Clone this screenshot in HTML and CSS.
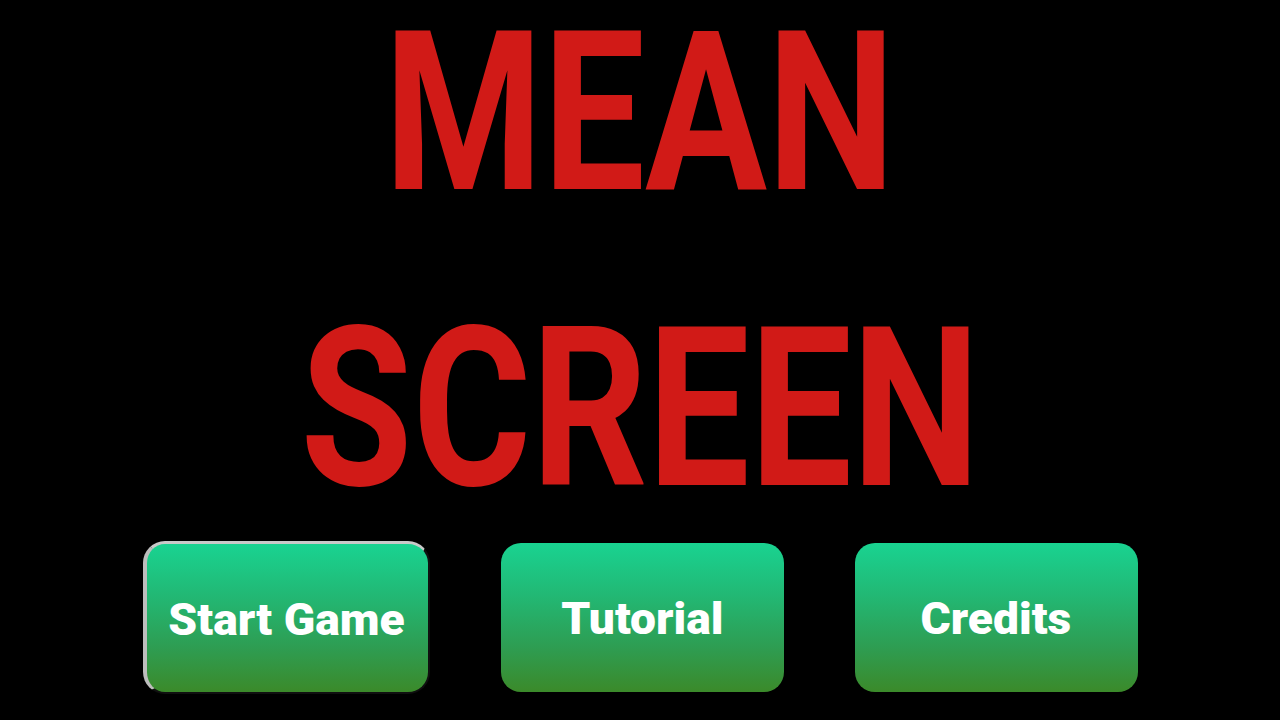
FILE: index.html
```html
<!DOCTYPE html>
<html>
<head>
<meta charset="utf-8">
<link rel="stylesheet" href="styles.css">
</head>
<body>
<main class="screen">
  <h1 class="title">
    <span class="word">MEAN</span>
    <span class="word">SCREEN</span>
  </h1>
  <nav class="menu">
    <button class="btn btn-focus"><span class="label">Start Game</span></button>
    <button class="btn"><span class="label">Tutorial</span></button>
    <button class="btn"><span class="label">Credits</span></button>
  </nav>
</main>
</body>
</html>
```
FILE: styles.css
```css
html, body {
  margin: 0;
  padding: 0;
  background: #000;
  width: 1280px;
  height: 720px;
  overflow: hidden;
}
.screen {
  display: flex;
  flex-direction: column;
  align-items: center;
  width: 1280px;
  height: 720px;
}
.title {
  margin: 0;
  padding-top: 2px;
  display: flex;
  flex-direction: column;
  align-items: center;
  gap: 74px;
  font-family: Roboto, "Liberation Sans", sans-serif;
  font-weight: 700;
  font-size: 222px;
  line-height: 222px;
  color: #d11a17;
}
.word {
  display: block;
  transform: scaleX(0.818);
  white-space: nowrap;
}
.menu {
  margin-top: 21px;
  display: flex;
  align-items: center;
  justify-content: center;
  gap: 71px;
  width: 100%;
}
.btn {
  box-sizing: border-box;
  width: 283px;
  height: 149px;
  border: none;
  border-radius: 20px;
  background: linear-gradient(180deg, #19d391 0%, #22b874 35%, #2e9d52 70%, #3b8a2a 100%);
  display: flex;
  align-items: center;
  justify-content: center;
  padding: 0;
  cursor: pointer;
}
.btn-focus {
  width: 287px;
  height: 153px;
  border-style: solid;
  border-width: 3px 2px 2px 4px;
  border-color: #c9c9c9 #101010 #101010 #bdbdbd;
  border-radius: 22px;
}
.label {
  display: block;
  font-family: Roboto, "Liberation Sans", sans-serif;
  font-weight: 900;
  font-size: 44px;
  color: #fff;
  white-space: nowrap;
  margin-top: 3px;
  transform: scaleX(1.05);
}
```
